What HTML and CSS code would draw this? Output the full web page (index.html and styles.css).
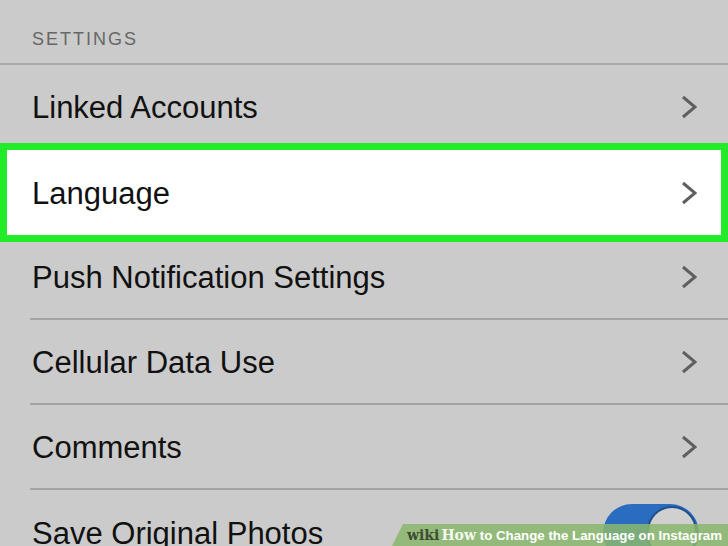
FILE: index.html
```html
<!DOCTYPE html>
<html lang="en">
<head>
    <meta charset="UTF-8">
    <meta name="viewport" content="width=device-width, initial-scale=1.0">
    <title>Settings</title>
    <link rel="stylesheet" href="styles.css">
</head>
<body>
    <div class="screen">
        <div class="head">SETTINGS</div>

        <div class="list">
            <div class="row">
                <div class="inner">
                    <span>Linked Accounts</span>
                    <svg class="chev" viewBox="0 0 16 24"><polyline points="2,2 14,12 2,22"/></svg>
                </div>
            </div>
            <div class="row active">
                <div class="inner">
                    <span>Language</span>
                    <svg class="chev" viewBox="0 0 16 24"><polyline points="2,2 14,12 2,22"/></svg>
                </div>
            </div>
            <div class="row">
                <div class="inner">
                    <span>Push Notification Settings</span>
                    <svg class="chev" viewBox="0 0 16 24"><polyline points="2,2 14,12 2,22"/></svg>
                </div>
            </div>
            <div class="row">
                <div class="inner">
                    <span>Cellular Data Use</span>
                    <svg class="chev" viewBox="0 0 16 24"><polyline points="2,2 14,12 2,22"/></svg>
                </div>
            </div>
            <div class="row">
                <div class="inner">
                    <span>Comments</span>
                    <svg class="chev" viewBox="0 0 16 24"><polyline points="2,2 14,12 2,22"/></svg>
                </div>
            </div>
            <div class="row">
                <div class="inner last">
                    <span>Save Original Photos</span>
                    <div class="toggle"><div class="knob"></div></div>
                </div>
            </div>
        </div>

        <!-- wikihow caption -->
        <div class="banner">
            <b class="wiki">wiki</b><b class="how">How</b> to Change the Language on Instagram
        </div>
    </div>
</body>
</html>
```

FILE: styles.css
```css
*{
    margin: 0;
    padding: 0;
    box-sizing: border-box;
}
body{
    background-color: #cbcbcb;
    font-family: "Liberation Sans", Arial, sans-serif;
    overflow: hidden;
}
.screen{
    position: relative;
    width: 728px;
    height: 546px;
    overflow: hidden;
}
.head{
    height: 65px;
    padding: 29px 0 0 32px;
    font-size: 18px;
    letter-spacing: 2px;
    color: #676767;
    border-bottom: 2px solid #a9a9a9;
}
.row{
    padding-left: 30px;
}
.inner{
    height: 85px;
    display: flex;
    justify-content: space-between;
    align-items: center;
    padding: 0 31px 0 2px;
    border-bottom: 2px solid #a3a3a3;
    font-size: 31px;
    color: #111;
}
.inner span{
    padding-top: 2px;
}
.inner.last{
    border-bottom: none;
}
.row.active{
    margin: 0 7px;
    padding-left: 0;
    background-color: #fff;
    outline: 7px solid #22ec2a;
}
.row.active .inner{
    padding-left: 25px;
    padding-right: 24px;
    border-bottom: none;
}
.chev{
    width: 16px;
    height: 24px;
}
.chev polyline{
    fill: none;
    stroke: #5f5f5f;
    stroke-width: 3;
}
.toggle{
    flex-shrink: 0;
    align-self: flex-start;
    width: 96px;
    height: 58px;
    margin-top: 14px;
    margin-right: -2px;
    border-radius: 29px;
    background-color: #2a6cc0;
    display: flex;
    justify-content: flex-end;
    align-items: center;
    padding: 2px;
}
.knob{
    width: 50px;
    height: 54px;
    border-radius: 27px;
    background-color: #d0d0d0;
    border: 2px solid #1f4f8e;
}
.banner{
    position: absolute;
    right: 0;
    bottom: 0;
    width: 336px;
    height: 22px;
    padding: 3px 0 0 15px;
    background-color: rgba(137, 183, 108, 0.85);
    clip-path: polygon(11px 0, 100% 0, 100% 100%, 0 100%);
    color: #fff;
    font-size: 13.3px;
    font-weight: bold;
    white-space: nowrap;
}
.banner .wiki{
    font-family: "DejaVu Serif", "Liberation Serif", serif;
    font-size: 14px;
    color: #3d4b36;
    margin-right: 2px;
}
.banner .how{
    font-family: "DejaVu Serif", "Liberation Serif", serif;
    font-size: 14px;
    color: #f4f8f0;
}
```
